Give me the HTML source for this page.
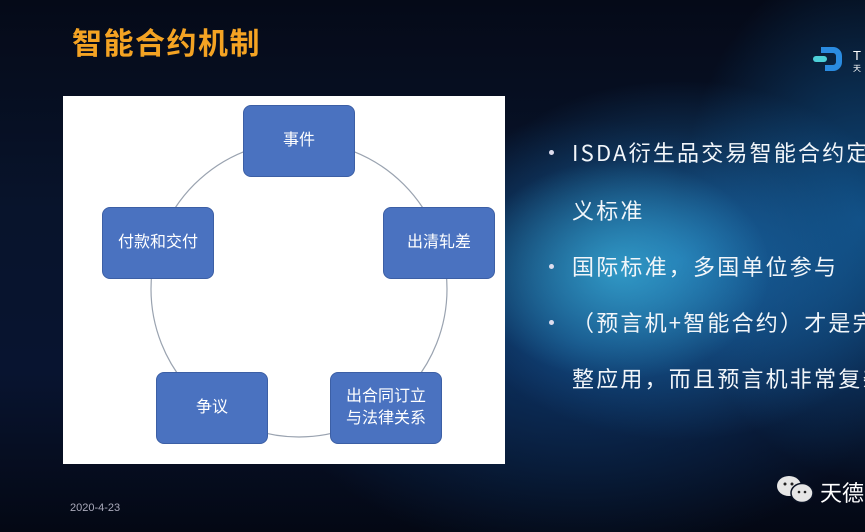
<!DOCTYPE html>
<html><head><meta charset="utf-8"><style>
body{margin:0;width:865px;height:532px;overflow:hidden;font-family:"Liberation Sans","Noto Sans CJK SC",sans-serif;}
.bg{position:absolute;inset:0;background:
radial-gradient(ellipse 150px 110px at 620px 270px,rgba(60,180,220,0.7),transparent),
radial-gradient(ellipse 240px 180px at 680px 260px,rgba(30,120,190,0.75),transparent),
radial-gradient(ellipse 180px 260px at 860px 220px,rgba(20,110,180,0.6),transparent),
radial-gradient(ellipse 320px 220px at 580px 340px,rgba(15,70,130,0.65),transparent),
linear-gradient(180deg,#050a18 0%,#08142c 40%,#081430 70%,#040814 100%);}
.title{position:absolute;left:72px;top:19px;font-size:30px;font-weight:bold;color:#f4a323;letter-spacing:1.5px;font-family:"Noto Sans CJK SC",sans-serif;}
.panel{position:absolute;left:63px;top:96px;width:442px;height:368px;background:#fff;}
.box{position:absolute;width:112px;height:72px;background:#4a72c0;border:1px solid #3c5fa5;border-radius:8px;color:#fff;font-size:16px;display:flex;align-items:center;justify-content:center;text-align:center;line-height:22px;box-sizing:border-box;}
.b{position:absolute;color:#f2f6fa;font-size:22px;letter-spacing:2.2px;font-family:"Noto Sans CJK SC",sans-serif;white-space:nowrap;}
.dot{position:absolute;width:5px;height:5px;border-radius:50%;background:#dde;}
</style></head><body>
<div class="bg"></div>
<div class="title">智能合约机制</div>
<svg style="position:absolute;left:813px;top:46px" width="52" height="30"><rect x="0" y="10" width="14" height="6" rx="3" fill="#4dd0d8"/><path d="M8 4h12a6 6 0 0 1 6 6v6a6 6 0 0 1-6 6H12" stroke="#2a8be0" stroke-width="6" fill="none"/><text x="40" y="14" fill="#fff" font-size="13" font-family="Liberation Sans">T</text><text x="40" y="25" fill="#fff" font-size="8" font-family="Noto Sans CJK SC">天</text></svg>
<div class="panel"></div>
<svg style="position:absolute;left:0;top:0" width="865" height="532"><circle cx="299" cy="289" r="148" fill="none" stroke="#9aa3b0" stroke-width="1.2"/></svg>
<div class="box" style="left:243px;top:105px">事件</div>
<div class="box" style="left:383px;top:207px">出清轧差</div>
<div class="box" style="left:330px;top:372px">出合同订立<br>与法律关系</div>
<div class="box" style="left:156px;top:372px">争议</div>
<div class="box" style="left:102px;top:207px">付款和交付</div>
<div class="dot" style="left:549px;top:150px"></div>
<div class="b" style="left:572px;top:136px">ISDA衍生品交易智能合约定</div>
<div class="b" style="left:572px;top:194px">义标准</div>
<div class="dot" style="left:549px;top:264px"></div>
<div class="b" style="left:572px;top:250px">国际标准，多国单位参与</div>
<div class="dot" style="left:549px;top:320px"></div>
<div class="b" style="left:572px;top:306px">（预言机+智能合约）才是完</div>
<div class="b" style="left:572px;top:362px">整应用，而且预言机非常复杂</div>
<div style="position:absolute;left:70px;top:502px;color:#aab;font-size:11px">2020-4-23</div>
<svg style="position:absolute;left:776px;top:474px" width="40" height="32"><ellipse cx="13" cy="12" rx="12" ry="10" fill="#e6e6e6"/><ellipse cx="26" cy="19" rx="11" ry="9.5" fill="#e6e6e6" stroke="#0a1224" stroke-width="1.5"/><circle cx="9" cy="10" r="1.5" fill="#222"/><circle cx="16" cy="10" r="1.5" fill="#222"/><circle cx="23" cy="18" r="1.3" fill="#222"/><circle cx="29" cy="18" r="1.3" fill="#222"/></svg>
<div style="position:absolute;left:820px;top:476px;color:#fff;font-size:22px;font-family:'Noto Sans CJK SC',sans-serif;white-space:nowrap">天德</div>
</body></html>
